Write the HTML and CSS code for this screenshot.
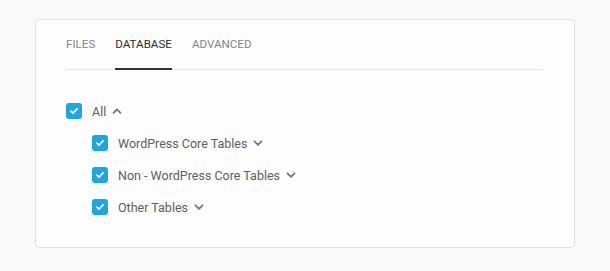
FILE: index.html
```html
<!DOCTYPE html>
<html>
<head>
<meta charset="utf-8">
<link rel="stylesheet" href="styles.css">
</head>
<body>
<div class="card">
  <nav class="tabs">
    <span class="tab">Files</span>
    <span class="tab active">Database</span>
    <span class="tab">Advanced</span>
  </nav>
  <div class="tree">
    <div class="row">
      <span class="cb"><svg viewBox="0 0 16 16" width="16" height="16"><path d="M5 8.2l2 2 4-4.2" fill="none" stroke="#fff" stroke-width="1.8" stroke-linecap="round" stroke-linejoin="round"/></svg></span>
      <span class="label">All</span>
      <svg class="chev" viewBox="0 0 10 10" width="10" height="10"><path d="M1.5 6.8L5 3.3l3.5 3.5" fill="none" stroke="#777" stroke-width="1.8" stroke-linecap="round" stroke-linejoin="round"/></svg>
    </div>
    <div class="sub">
      <div class="row">
        <span class="cb"><svg viewBox="0 0 16 16" width="16" height="16"><path d="M5 8.2l2 2 4-4.2" fill="none" stroke="#fff" stroke-width="1.8" stroke-linecap="round" stroke-linejoin="round"/></svg></span>
        <span class="label">WordPress Core Tables</span>
        <svg class="chev" viewBox="0 0 10 10" width="10" height="10"><path d="M1.5 3.3L5 6.8l3.5-3.5" fill="none" stroke="#777" stroke-width="1.8" stroke-linecap="round" stroke-linejoin="round"/></svg>
      </div>
      <div class="row">
        <span class="cb"><svg viewBox="0 0 16 16" width="16" height="16"><path d="M5 8.2l2 2 4-4.2" fill="none" stroke="#fff" stroke-width="1.8" stroke-linecap="round" stroke-linejoin="round"/></svg></span>
        <span class="label">Non - WordPress Core Tables</span>
        <svg class="chev" viewBox="0 0 10 10" width="10" height="10"><path d="M1.5 3.3L5 6.8l3.5-3.5" fill="none" stroke="#777" stroke-width="1.8" stroke-linecap="round" stroke-linejoin="round"/></svg>
      </div>
      <div class="row">
        <span class="cb"><svg viewBox="0 0 16 16" width="16" height="16"><path d="M5 8.2l2 2 4-4.2" fill="none" stroke="#fff" stroke-width="1.8" stroke-linecap="round" stroke-linejoin="round"/></svg></span>
        <span class="label">Other Tables</span>
        <svg class="chev" viewBox="0 0 10 10" width="10" height="10"><path d="M1.5 3.3L5 6.8l3.5-3.5" fill="none" stroke="#777" stroke-width="1.8" stroke-linecap="round" stroke-linejoin="round"/></svg>
      </div>
    </div>
  </div>
</div>
</body>
</html>
```
FILE: styles.css
```css
html, body {
  margin: 0;
  padding: 0;
}
body {
  background: #f9f9f9;
  font-family: Roboto, "Liberation Sans", sans-serif;
  padding: 19px 0 0 35px;
}
.card {
  box-sizing: border-box;
  width: 540px;
  height: 229px;
  background: #fdfdfd;
  border: 1px solid #e2e2e2;
  border-radius: 4px;
  padding: 0 31px 0 30px;
}
.tabs {
  display: flex;
  border-bottom: 1px solid #e4e4e4;
}
.tab {
  font-size: 11.6px;
  line-height: 14px;
  text-transform: uppercase;
  color: #858585;
  padding: 17px 0 17px;
  margin-right: 20px;
  margin-bottom: -1px;
  border-bottom: 2px solid transparent;
}
.tab.active {
  color: #2e2e2e;
  border-bottom-color: #333;
}
.tree {
  margin-top: 25px;
}
.row {
  display: flex;
  align-items: center;
  height: 32px;
}
.sub {
  padding-left: 26px;
}
.cb {
  width: 16px;
  height: 16px;
  border-radius: 3px;
  background: #1fa6e2;
  display: flex;
  margin-right: 10px;
}
.label {
  font-size: 12.5px;
  color: #5e5e5e;
}
.chev {
  margin-left: 6px;
}
```
